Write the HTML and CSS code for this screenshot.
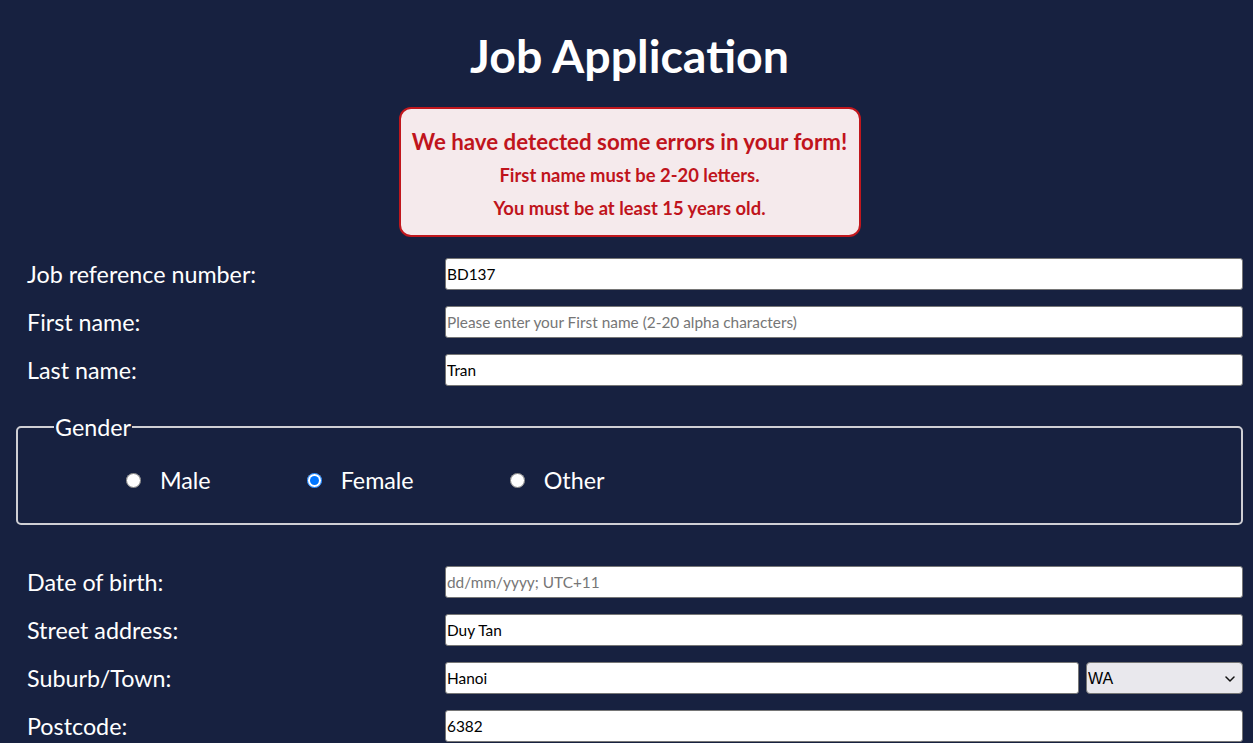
FILE: index.html
```html
<!DOCTYPE html>
<html lang="en">
<head>
<meta charset="utf-8">
<title>Job Application</title>
<link rel="stylesheet" href="styles.css">
</head>
<body>
<main class="page">
  <h1 class="title">Job Application</h1>
  <div class="errors">
    <h2 class="errors-head">We have detected some errors in your form!</h2>
    <p class="errors-line">First name must be 2-20 letters.</p>
    <p class="errors-line">You must be at least 15 years old.</p>
  </div>
  <form class="form">
    <div class="row">
      <label class="label" for="ref">Job reference number:</label>
      <input class="field" id="ref" type="text" value="BD137">
    </div>
    <div class="row">
      <label class="label" for="first">First name:</label>
      <input class="field" id="first" type="text" placeholder="Please enter your First name (2-20 alpha characters)">
    </div>
    <div class="row">
      <label class="label" for="last">Last name:</label>
      <input class="field" id="last" type="text" value="Tran">
    </div>
    <fieldset class="gender">
      <legend class="legend">Gender</legend>
      <div class="radios">
        <label class="radio"><input type="radio" name="g"><span>Male</span></label>
        <label class="radio"><input type="radio" name="g" checked><span>Female</span></label>
        <label class="radio"><input type="radio" name="g"><span>Other</span></label>
      </div>
    </fieldset>
    <div class="row row-dob">
      <label class="label" for="dob">Date of birth:</label>
      <input class="field" id="dob" type="text" placeholder="dd/mm/yyyy; UTC+11">
    </div>
    <div class="row">
      <label class="label" for="street">Street address:</label>
      <input class="field" id="street" type="text" value="Duy Tan">
    </div>
    <div class="row">
      <label class="label" for="town">Suburb/Town:</label>
      <div class="pair">
        <input class="field" id="town" type="text" value="Hanoi">
        <div class="select-wrap">
          <select class="state">
            <option>WA</option>
            <option>NSW</option>
            <option>VIC</option>
          </select>
          <svg class="chevron" width="10" height="6" viewBox="0 0 10 6" aria-hidden="true"><path d="M1 1l4 4 4-4" fill="none" stroke="#111" stroke-width="1.5" stroke-linecap="round" stroke-linejoin="round"/></svg>
        </div>
      </div>
    </div>
    <div class="row">
      <label class="label" for="post">Postcode:</label>
      <input class="field" id="post" type="text" value="6382">
    </div>
  </form>
</main>
</body>
</html>
```
FILE: styles.css
```css
html, body {
  margin: 0;
  padding: 0;
  background: #172140;
}
body {
  font-family: Lato, "Liberation Sans", sans-serif;
  color: #ffffff;
}
.page {
  padding: 0 10px 0 16px;
  display: flex;
  flex-direction: column;
  align-items: center;
}
.title {
  margin: 25px 0 22px;
  font-size: 46.5px;
  line-height: 60px;
  font-weight: 700;
  text-align: center;
}
.errors {
  box-sizing: border-box;
  width: 462px;
  padding: 18px 4px 10px;
  background: #f5eaec;
  border: 2px solid #c0171d;
  border-radius: 12px;
  color: #c0141c;
  text-align: center;
}
.errors-head {
  margin: 0 0 2px;
  font-size: 22.3px;
  line-height: 30px;
  font-weight: 700;
}
.errors-line {
  margin: 0;
  font-size: 18.4px;
  line-height: 33px;
  font-weight: 700;
}
.form {
  align-self: stretch;
  margin-top: 21px;
}
.row {
  display: flex;
  align-items: center;
  height: 32px;
  margin-bottom: 16px;
}
.row-dob {
  margin-top: 41px;
}
.label {
  flex: 0 0 429px;
  box-sizing: border-box;
  padding-left: 11px;
  font-size: 23.3px;
}
.field {
  flex: 1;
  min-width: 0;
  box-sizing: border-box;
  height: 32px;
  padding: 1px 1px;
  border: 1px solid #767676;
  border-radius: 3px;
  background: #ffffff;
  color: #000000;
  font-family: Lato, "Liberation Sans", sans-serif;
  font-size: 15.4px;
}
.field::placeholder {
  color: #767676;
}
.pair {
  flex: 1;
  display: flex;
  gap: 7px;
  height: 32px;
}
.select-wrap {
  position: relative;
  flex: 0 0 157px;
  height: 32px;
}
.state {
  appearance: none;
  -webkit-appearance: none;
  width: 100%;
  box-sizing: border-box;
  height: 32px;
  border: 1px solid #767676;
  border-radius: 4px;
  background-color: #e9e8ed;
  color: #000000;
  font-family: "Liberation Sans", Arial, sans-serif;
  font-size: 16px;
  padding: 0 0 0 1px;
}
.chevron {
  position: absolute;
  right: 8px;
  top: 14px;
  pointer-events: none;
}
.gender {
  margin: 26px 0 0;
  padding: 23px 0 28px 36px;
  border: 2px solid #cfcfd4;
  border-radius: 5px;
}
.legend {
  padding: 0 1px;
  font-size: 23.3px;
  line-height: 30px;
}
.radios {
  display: flex;
  align-items: center;
  gap: 96px;
  height: 30px;
  padding-left: 72px;
}
.radio {
  display: flex;
  align-items: center;
  gap: 19px;
  font-size: 23.3px;
}
.radio input {
  margin: 0;
  width: 15px;
  height: 15px;
}
```
